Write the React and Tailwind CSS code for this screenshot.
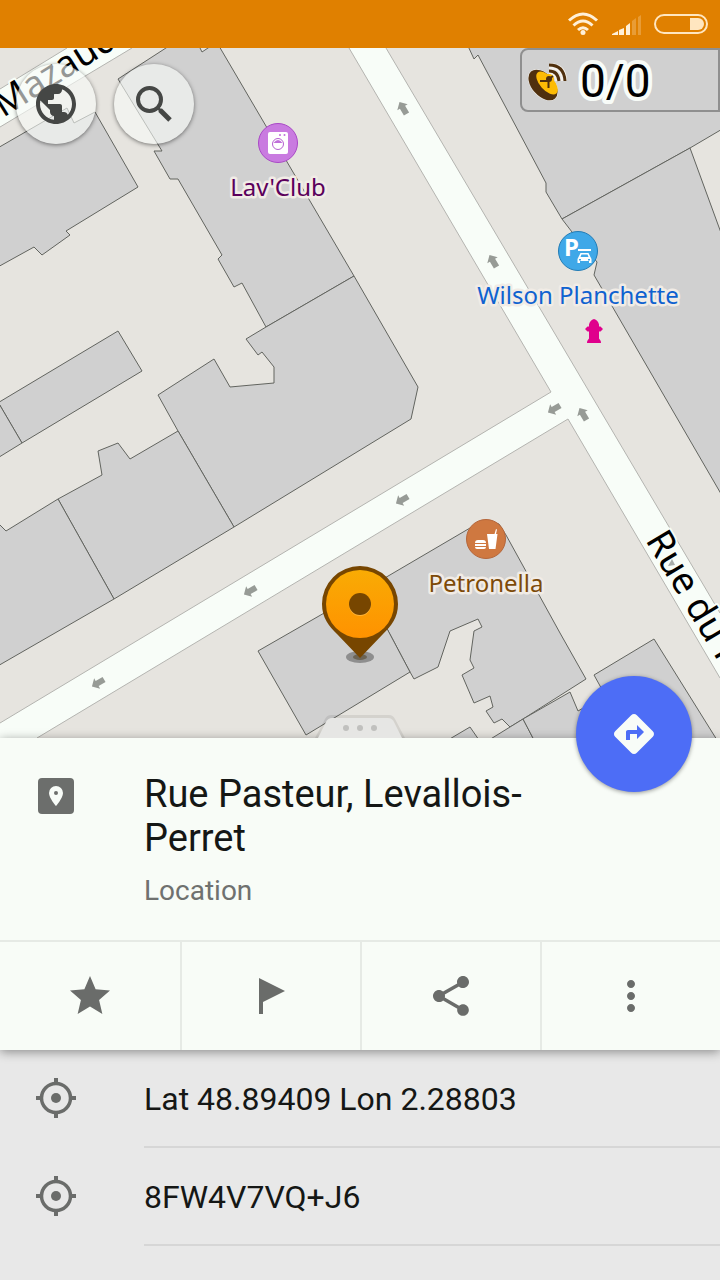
import { MdDirections, MdMoreVert, MdPublic, MdShare, MdStar } from "react-icons/md";

const buildings = [
  "-4,149 67,108 74,123 95,112 138,187 66,231 70,235 42,255 34,247 -4,268",
  "169,46 118,79 162,151 154,151 170,179 178,179 222,255 218,259 234,287 242,283 266,327 354,276 219,46 211,46 202,52 199,46",
  "354,276 418,387 411,419 234,527 178,431 158,395 214,359 230,387 274,383 274,367 262,352 258,355 246,339 266,327",
  "178,431 234,527 114,599 58,499 102,475 98,451 118,443 130,459",
  "58,499 114,599 -4,667 -4,521 6,531",
  "-4,404 118,331 142,371 22,443 -2,402",
  "-2,402 22,443 -4,459",
  "468,46 474,59 478,55 546,183 546,192 562,219 690,148 724,128 724,46",
  "562,219 572,232 597,262 594,275 724,499 724,241 690,148",
  "366,589 470,528 487,521 499,524 506,535 560,633 586,679 523,719 510,727 502,719 494,723 486,711 493,707 490,696 474,703 462,675 474,668 470,660 474,631 482,627 478,619 450,631 438,667 414,679 410,672",
  "258,651 366,589 410,672 306,735",
  "448,740 470,727 479,740",
  "489,740 523,719 534,740",
  "523,719 570,692 578,711 601,698 640,740 534,740",
  "594,675 654,639 717,740 630,740",
];

const arrows = [
  [403, 108, -30],
  [493, 261, -30],
  [583, 414, -30],
  [554, 409, -120],
  [402, 500, -120],
  [250, 591, -120],
  [98, 683, -120],
];

function MapDrawing() {
  return (
    <svg
      className="block h-full w-full"
      viewBox="0 48 720 690"
      preserveAspectRatio="xMidYMid slice"
      role="img"
      aria-label="Map"
    >
      <defs>
        <linearGradient id="pinFill" x1="0" y1="0" x2="0" y2="1">
          <stop offset="0" stopColor="#f9ab04" />
          <stop offset="1" stopColor="#ff9200" />
        </linearGradient>
      </defs>
      <rect y="48" width="720" height="690" fill="#e6e4df" />

      <path d="M0 89 67 48H132L0 127Z" fill="#f8fdf8" />
      <path d="M349 48H386L720 613V678L568 419 37 738H0V723L551 392Z" fill="#f8fdf8" />
      <path
        d="M0 89 67 48M0 127 132 48M349 48 551 392 0 723M386 48 720 613M720 678 568 419 37 738"
        fill="none"
        stroke="#b4b4b0"
        strokeWidth="1"
      />

      {buildings.map((points) => (
        <polygon key={points} points={points} fill="#d0d0d0" stroke="#62645f" strokeWidth="1" />
      ))}

      {arrows.map(([x, y, angle]) => (
        <path
          key={`${x}-${y}`}
          d="M0-7 6-1H3V7H-3V-1H-6Z"
          fill="#979b96"
          transform={`translate(${x} ${y}) rotate(${angle})`}
        />
      ))}

      <g
        fontFamily="'Noto Sans', sans-serif"
        fontSize="37"
        fill="#000"
        stroke="#f8fdf8"
        strokeWidth="4"
        strokeLinejoin="round"
        paintOrder="stroke"
      >
        <text transform="translate(3 118) rotate(-32)">Mazaud</text>
        <text transform="translate(645 540) rotate(59)">Rue du P</text>
      </g>
      <path d="M672 559 675 565 668 566Z" fill="#a8aca8" />

      {/* Laundry */}
      <circle cx="278" cy="143" r="19.5" fill="#c97be0" stroke="#a949c6" />
      <rect x="268" y="132" width="20" height="22" rx="2" fill="#fff" />
      <g fill="#c06fda">
        <circle cx="280" cy="135" r="1" />
        <circle cx="284.500" cy="135" r="1" />
        <path d="M273.500 143q4.500-6 9 0Z" />
      </g>
      <circle cx="278" cy="144" r="5.500" fill="none" stroke="#b55fd0" />

      {/* Covered parking */}
      <circle cx="578" cy="251" r="19.500" fill="#3fa8e8" stroke="#237cb5" />
      <text x="564" y="256" fontFamily="'Noto Sans', sans-serif" fontWeight="700" fontSize="24" fill="#fff">
        P
      </text>
      <path d="M578 249h13v2h-13Z" fill="#fff" />
      <path
        fillRule="evenodd"
        d="M580.500 253h8l2 4 1 2v4h-2.500v-2h-9v2h-2.500v-4l1-2ZM581.500 254.500l-1 2.500h8l-1-2.500ZM579 259v1.500h2V259ZM588 259v1.500h2V259Z"
        fill="#fff"
      />

      {/* Fast food */}
      <circle cx="486" cy="539" r="19.500" fill="#cf7840" stroke="#b5663a" />
      <path
        d="M487 534h10.500l-2 15h-6.500ZM494.500 534l1.500-5 1 .4-1 4.600ZM475 543q0-3 3-3h5q3 0 3 3ZM475 544h11v2h-11ZM475 547h11q0 2-2 2h-7q-2 0-2-2Z"
        fill="#fff"
      />

      {/* Hydrant */}
      <path
        d="M594 319q4 1 5 5.500v2h1.500l2.500 2.500-2.500 2.500H599v7q2 2 2 4.500h-14q0-2.500 2-4.500v-7h-1.500L585 329l2.500-2.500H589v-2q1-4.500 5-5.500Z"
        fill="#e0008c"
      />

      <g
        fontFamily="'Noto Sans', sans-serif"
        fontSize="24"
        textAnchor="middle"
        stroke="#f1ece6"
        strokeWidth="5"
        strokeLinejoin="round"
        paintOrder="stroke"
      >
        <text x="278" y="196" fill="#5b005b">Lav'Club</text>
        <text x="578" y="304" fill="#0f62d0">Wilson Planchette</text>
        <text x="486" y="592" fill="#7d4a08">Petronella</text>
      </g>

      {/* Selected place */}
      <ellipse cx="360" cy="657" rx="14" ry="6" fill="#8e8e8e" />
      <ellipse cx="360" cy="657" rx="7" ry="3" fill="#6c6455" />
      <path d="M360 566a38 38 0 0 1 38 38c0 14-7 22-15 30L360 658 337 634c-8-8-15-16-15-30a38 38 0 0 1 38-38Z" fill="#774600" />
      <circle cx="360" cy="604" r="34" fill="url(#pinFill)" />
      <circle cx="360" cy="605" r="11" fill="#ffb53a" />
      <circle cx="360" cy="604" r="11" fill="#774600" />
    </svg>
  );
}

function StatusBar() {
  return (
    <header className="flex h-12 shrink-0 items-center justify-end bg-[#e08000] pr-3">
      <svg className="mr-3 h-6 w-8" viewBox="0 0 32 24" fill="none" stroke="#fff0d8" strokeWidth="3" aria-label="Wi-Fi">
        <path d="M1 8.500Q15-4.500 29 8.500M5.500 13.500Q15 4.500 24.500 13.500M10 18Q15 13.500 20 18" />
        <circle cx="15" cy="20.500" r="2.500" fill="#fff0d8" stroke="none" />
      </svg>
      <svg className="mr-3 h-6 w-[30px]" viewBox="0 0 30 24" fill="#fff0d8" aria-label="Signal">
        <path d="M0 23v-1l6-3v4ZM7 23v-5l5-2v7ZM14 23v-9l4-3v12Z" />
        <path d="M20 23V9l4-3v17ZM26 23V5l3-2v20Z" opacity="0.250" />
      </svg>
      <svg className="h-5 w-[54px]" viewBox="0 0 54 20" aria-label="Battery">
        <rect x="1" y="1" width="52" height="18" rx="9" fill="none" stroke="#ffe6c0" strokeWidth="2" />
        <path d="M36 4h8a6 6 0 0 1 0 12h-8Z" fill="#ffe6c0" />
      </svg>
    </header>
  );
}

function SatelliteIcon() {
  return (
    <svg className="h-11 w-11" viewBox="0 0 44 44" aria-hidden="true">
      <g stroke="#f4f2ee" strokeWidth="6" fill="none">
        <path d="M23 8q15 0 15 15M23 14q8 0 9 9" />
        <ellipse cx="17" cy="27" rx="10" ry="17" transform="rotate(-42 17 27)" strokeWidth="3" />
      </g>
      <ellipse cx="17" cy="27" rx="11" ry="18" fill="#50300e" transform="rotate(-42 17 27)" />
      <ellipse cx="21" cy="25" rx="7" ry="14" fill="#fdbb05" transform="rotate(-42 21 25)" />
      <path d="M23 7q15 0 16 16M23 13q9 0 10 10" fill="none" stroke="#50300e" strokeWidth="3" />
      <circle cx="23" cy="21" r="5" fill="#fdbb05" />
      <circle cx="23" cy="21" r="3" fill="#50300e" />
      <path d="M14 23h8.500v7M23 21l4-3" fill="none" stroke="#50300e" strokeWidth="2" />
    </svg>
  );
}

function SearchIcon() {
  return (
    <svg className="h-12 w-12" viewBox="0 0 48 48" fill="none" stroke="currentColor" aria-hidden="true">
      <circle cx="19.500" cy="19.500" r="11.500" strokeWidth="4" />
      <path d="M27 27 31 31" strokeWidth="3" />
      <path d="M30 30 40 40" strokeWidth="5" />
    </svg>
  );
}

function TargetIcon() {
  return (
    <svg className="h-10 w-10" viewBox="0 0 40 40" fill="none" stroke="currentColor" strokeWidth="4" aria-hidden="true">
      <circle cx="20" cy="20" r="14.500" strokeWidth="3.500" />
      <circle cx="20" cy="20" r="5" fill="currentColor" stroke="none" />
      <path d="M20 0V5M20 35V40M0 20H5M35 20H40" />
    </svg>
  );
}

function FlagIcon() {
  return (
    <svg className="h-12 w-12" viewBox="0 0 48 48" fill="currentColor" aria-hidden="true">
      <path d="M12 6 38 19 16 30V42H12Z" />
    </svg>
  );
}

const actions = [
  { label: "Add to favorites", icon: <MdStar size={48} /> },
  { label: "Add marker", icon: <FlagIcon /> },
  { label: "Share", icon: <MdShare size={48} /> },
  { label: "More actions", icon: <MdMoreVert size={48} /> },
];

const details = ["Lat 48.89409 Lon 2.28803", "8FW4V7VQ+J6"];

const roundButton =
  "flex h-20 w-20 items-center justify-center rounded-full bg-[#f8fcf8]/60 text-[#454745] shadow-[0_1px_4px_rgba(0,0,0,0.5)]";

export default function App() {
  return (
    <div className="flex min-h-screen flex-col bg-[#e8e8e8] font-[Roboto,sans-serif] text-[#151715]">
      <StatusBar />

      <main className="flex flex-1 flex-col">
        <section className="relative min-h-[400px] flex-1 overflow-hidden">
          <div className="absolute inset-0">
            <MapDrawing />
          </div>
          <div className="absolute inset-x-4 top-4 flex gap-[18px]">
            <button type="button" aria-label="Configure map" className={roundButton}>
              <MdPublic size={48} />
            </button>
            <button type="button" aria-label="Search" className={roundButton}>
              <SearchIcon />
            </button>
          </div>
          <div className="absolute top-0 right-0 flex h-16 w-[200px] items-center rounded-l-lg border-2 border-[#8f8f8f] bg-[#d0d0d0] pl-1">
            <SatelliteIcon />
            <svg className="h-14 w-24" viewBox="0 0 96 56" role="img" aria-label="Satellites 0/0">
              <text
                x="10"
                y="45"
                fontFamily="Roboto, sans-serif"
                fontSize="46"
                stroke="#f8fcf8"
                strokeWidth="8"
                strokeLinejoin="round"
                paintOrder="stroke"
              >
                0/0
              </text>
            </svg>
          </div>
        </section>

        <section className="relative bg-[#f8fcf7] shadow-[0_2px_10px_rgba(0,0,0,0.4)]">
          <svg className="absolute bottom-full left-1/2 h-7 w-24 -translate-x-1/2" viewBox="0 0 96 28" aria-hidden="true">
            <path d="M3 28 13 9q2-4 6-4H77q4 0 6 4L93 28Z" fill="#000" opacity="0.080" />
            <path d="M6 28 14 12q2-4 6-4H76q4 0 6 4L90 28Z" fill="#e6e6e4" />
            <g fill="#c0c0be">
              <circle cx="34" cy="18" r="3" />
              <circle cx="48" cy="18" r="3" />
              <circle cx="62" cy="18" r="3" />
            </g>
          </svg>
          <button
            type="button"
            aria-label="Directions"
            className="absolute -top-[62px] right-7 flex h-[116px] w-[116px] items-center justify-center rounded-full bg-[#4d6df6] text-[#f8fcf8] shadow-[0_1px_4px_rgba(0,0,0,0.4)]"
          >
            <MdDirections size={48} />
          </button>
          <div className="flex min-h-[202px] pt-[34px]">
            <div className="w-36 shrink-0 pt-[6px] pl-[38px]">
              <svg className="h-9 w-9" viewBox="0 0 36 36" aria-hidden="true">
                <rect width="36" height="36" rx="4" fill="#6c6e6c" />
                <path
                  fillRule="evenodd"
                  d="M18 8a7 7 0 0 1 7 7c0 5-7 13-7 13S11 20 11 15a7 7 0 0 1 7-7Zm0 5a2 2 0 1 0 0 4 2 2 0 0 0 0-4Z"
                  fill="#f8fcf8"
                />
              </svg>
            </div>
            <div className="flex-1 pr-[170px]">
              <h1 className="text-[38px] leading-[44px]">Rue Pasteur, Levallois-Perret</h1>
              <p className="mt-3 text-[28px] leading-[38px] text-[#6f716f]">Location</p>
            </div>
          </div>
          <div className="grid grid-cols-4 border-t-2 border-[#e6eae5] text-[#6a6c6a]">
            {actions.map(({ label, icon }) => (
              <button
                key={label}
                type="button"
                aria-label={label}
                className="flex h-[108px] items-center justify-center border-[#e6eae5] not-first:border-l-2"
              >
                {icon}
              </button>
            ))}
          </div>
        </section>

        <ul className="pb-[34px]">
          {details.map((text) => (
            <li key={text} className="flex min-h-[98px]">
              <span className="flex h-24 w-36 shrink-0 items-center pl-9 text-[#6a6c6a]">
                <TargetIcon />
              </span>
              <span className="flex flex-1 items-center border-b-2 border-[#d6d6d6] pt-px text-[32px]">{text}</span>
            </li>
          ))}
        </ul>
      </main>
    </div>
  );
}
